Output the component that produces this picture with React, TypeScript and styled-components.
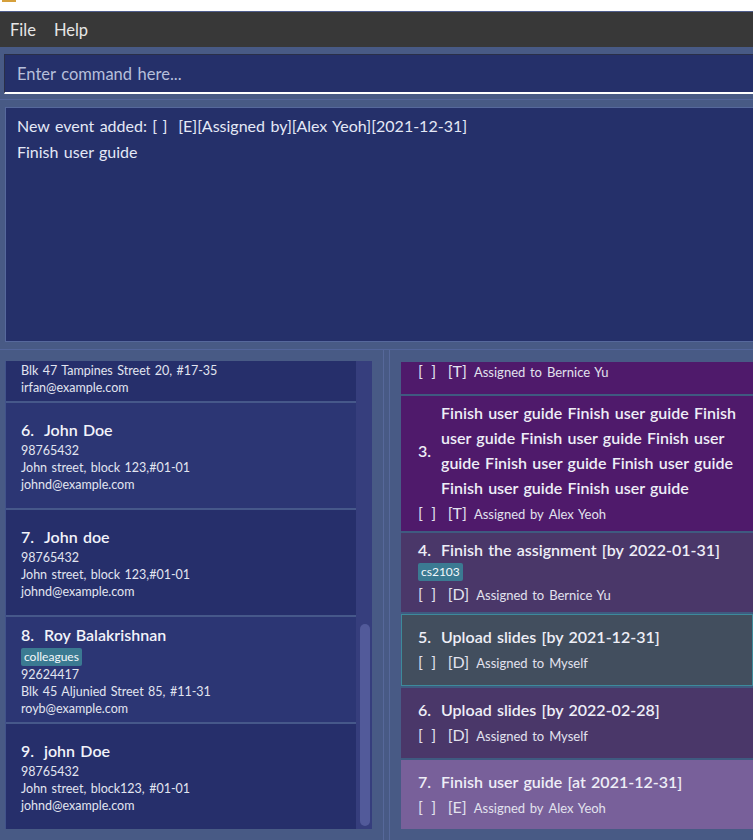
import React from 'react';
import styled, { createGlobalStyle } from 'styled-components';

const GlobalStyle = createGlobalStyle`
  html, body { margin: 0; padding: 0; background: #ffffff; }
  body { font-family: 'Lato', 'Liberation Sans', sans-serif; word-spacing: 0.08em; }
  * { box-sizing: border-box; }
`;

const Window = styled.div`
  width: 753px;
  height: 840px;
  overflow: hidden;
  display: flex;
  flex-direction: column;
  background: #485a85;
`;

const TitleStrip = styled.div`
  flex: none;
  height: 11px;
  background: #ffffff;
  padding-left: 2px;
`;

const AppIcon = styled.div`
  width: 14px;
  height: 2px;
  background: #d6a03c;
`;

const MenuBar = styled.div`
  flex: none;
  height: 36px;
  background: #383838;
  border-top: 1px solid #4f5d8c;
  display: flex;
  align-items: center;
  gap: 18px;
  padding-left: 10px;
`;

const MenuItem = styled.span`
  color: #e6e6e6;
  font-size: 16.5px;
`;

const CommandPane = styled.div`
  flex: none;
  padding: 7px 0 5px 4px;
  border-bottom: 1px solid #53659a;
`;

const CommandInput = styled.input`
  display: block;
  width: 100%;
  height: 40px;
  margin: 0;
  background: #25306a;
  border: none;
  border-top: 1px solid #2a2f48;
  border-left: 1px solid #2a2f48;
  border-bottom: 2px solid #ffffff;
  padding: 0 0 0 12px;
  font-family: 'Lato', 'Liberation Sans', sans-serif;
  font-size: 16.5px;
  word-spacing: 0.08em;
  color: #ffffff;
  outline: none;
  &::placeholder { color: #b6bfdb; }
`;

const ResultPane = styled.div`
  flex: none;
  padding: 7px 0 7px 5px;
`;

const ResultBox = styled.div`
  height: 235px;
  background: #25306a;
  border: 1px solid #56689c;
  border-right: none;
  padding: 5px 11px;
  color: #e4e8f6;
  font-size: 16px;
  line-height: 26px;
  white-space: pre;
`;

const SplitArea = styled.div`
  flex: 1;
  min-height: 0;
  display: flex;
  border-top: 1px solid #53659a;
`;

const LeftPane = styled.div`
  flex: none;
  width: 383px;
  padding: 11px 11px 11px 5px;
  display: flex;
`;

const PersonListBox = styled.div`
  flex: 1;
  display: flex;
  border-left: 1px solid #41528a;
`;

const PersonViewport = styled.div`
  flex: 1;
  overflow: hidden;
  background: #46588a;
`;

const PersonColumn = styled.div`
  display: flex;
  flex-direction: column;
  gap: 2px;
  margin-top: -65px;
`;

const PersonCard = styled.div<{ $alt: boolean }>`
  flex: none;
  height: 105px;
  background: ${(p) => (p.$alt ? '#2c3674' : '#262f6b')};
  padding-left: 15px;
  display: flex;
  flex-direction: column;
  justify-content: center;
`;

const NameRow = styled.div`
  display: flex;
  font-size: 16px;
  font-weight: 600;
  line-height: 24px;
  color: #f2f3fa;
`;

const IdLabel = styled.span`
  flex: none;
  width: 23px;
`;

const TagRow = styled.div`
  display: flex;
  gap: 4px;
  margin-top: 1px;
  height: 18px;
`;

const Tag = styled.span`
  background: #3b7a92;
  color: #f4f8fb;
  font-size: 12px;
  line-height: 17px;
  padding: 0 3px;
  border-radius: 2px;
`;

const Detail = styled.div`
  font-size: 12.5px;
  line-height: 17px;
  color: #e2e5f0;
`;

const ScrollTrack = styled.div`
  flex: none;
  width: 16px;
  background: #363e7d;
  padding: 0 2px 3px 4px;
  display: flex;
  flex-direction: column;
  justify-content: flex-end;
`;

const ScrollThumb = styled.div`
  height: 202px;
  border-radius: 5px;
  background: #525a9a;
`;

const Divider = styled.div`
  flex: none;
  width: 7px;
  border-left: 1px solid #56689a;
  border-right: 1px solid #56689a;
`;

const RightPane = styled.div`
  flex: 1;
  min-width: 0;
  padding: 12px 0 11px 11px;
  display: flex;
`;

const TaskViewport = styled.div`
  flex: 1;
  overflow: hidden;
  background: #3f5a80;
  display: flex;
  flex-direction: column;
  gap: 2px;
`;

type Kind = 'T' | 'D' | 'E';

const kindColor: Record<Kind, string> = {
  T: '#4f1a6b',
  D: '#4a3769',
  E: '#78609a',
};

const TaskCard = styled.div<{ $kind: Kind; $selected?: boolean; $shift?: number }>`
  flex: none;
  min-height: ${(p) => (p.$selected ? '72px' : '70px')};
  margin-top: ${(p) => (p.$shift ? `${p.$shift}px` : '0')};
  background: ${(p) => (p.$selected ? '#424e5e' : kindColor[p.$kind])};
  border: ${(p) => (p.$selected ? '1px solid #3d8a9b' : 'none')};
  padding: 4px 0 6px ${(p) => (p.$selected ? '16px' : '17px')};
  display: flex;
  flex-direction: column;
  justify-content: center;
`;

const TitleRow = styled.div`
  display: flex;
  align-items: center;
  font-size: 16px;
  font-weight: 600;
  line-height: 25px;
  color: #eeeef7;
`;

const TitleLines = styled.div`
  display: flex;
  flex-direction: column;
  white-space: nowrap;
`;

const MetaRow = styled.div`
  display: flex;
  align-items: baseline;
  height: 25px;
  line-height: 25px;
  color: #e2e2ee;
  white-space: nowrap;
`;

const Check = styled.span`
  font-size: 16px;
  letter-spacing: 1.5px;
  margin-right: 10px;
  white-space: pre;
`;

const TypeLabel = styled.span`
  font-size: 16px;
  margin-right: 7px;
`;

const AssignLabel = styled.span`
  font-size: 13px;
  margin-right: 5px;
`;

const AssigneeLabel = styled.span`
  font-size: 13px;
`;

type Person = { id: number; name: string; tags: string[]; phone: string; address: string; email: string };

const persons: Person[] = [
  { id: 5, name: 'Irfan Ibrahim', tags: ['classmates'], phone: '92492021', address: 'Blk 47 Tampines Street 20, #17-35', email: 'irfan@example.com' },
  { id: 6, name: 'John Doe', tags: [], phone: '98765432', address: 'John street, block 123,#01-01', email: 'johnd@example.com' },
  { id: 7, name: 'John doe', tags: [], phone: '98765432', address: 'John street, block 123,#01-01', email: 'johnd@example.com' },
  { id: 8, name: 'Roy Balakrishnan', tags: ['colleagues'], phone: '92624417', address: 'Blk 45 Aljunied Street 85, #11-31', email: 'royb@example.com' },
  { id: 9, name: 'john Doe', tags: [], phone: '98765432', address: 'John street, block123, #01-01', email: 'johnd@example.com' },
];

type Task = {
  id: number;
  kind: Kind;
  lines: string[];
  tags: string[];
  assign: string;
  who: string;
  selected?: boolean;
  shift?: number;
};

const tasks: Task[] = [
  { id: 2, kind: 'T', lines: ['Read lecture notes'], tags: [], assign: 'Assigned to', who: 'Bernice Yu', shift: -38 },
  {
    id: 3,
    kind: 'T',
    lines: [
      'Finish user guide Finish user guide Finish',
      'user guide Finish user guide Finish user',
      'guide Finish user guide Finish user guide',
      'Finish user guide Finish user guide',
    ],
    tags: [],
    assign: 'Assigned by',
    who: 'Alex Yeoh',
  },
  { id: 4, kind: 'D', lines: ['Finish the assignment [by 2022-01-31]'], tags: ['cs2103'], assign: 'Assigned to', who: 'Bernice Yu' },
  { id: 5, kind: 'D', lines: ['Upload slides [by 2021-12-31]'], tags: [], assign: 'Assigned to', who: 'Myself', selected: true },
  { id: 6, kind: 'D', lines: ['Upload slides [by 2022-02-28]'], tags: [], assign: 'Assigned to', who: 'Myself' },
  { id: 7, kind: 'E', lines: ['Finish user guide [at 2021-12-31]'], tags: [], assign: 'Assigned by', who: 'Alex Yeoh' },
];

export default function App() {
  return (
    <>
      <GlobalStyle />
      <Window>
        <TitleStrip>
          <AppIcon />
        </TitleStrip>
        <MenuBar>
          <MenuItem>File</MenuItem>
          <MenuItem>Help</MenuItem>
        </MenuBar>
        <CommandPane>
          <CommandInput placeholder="Enter command here..." readOnly />
        </CommandPane>
        <ResultPane>
          <ResultBox>{'New event added: [ ]  [E][Assigned by][Alex Yeoh][2021-12-31]\nFinish user guide'}</ResultBox>
        </ResultPane>
        <SplitArea>
          <LeftPane>
            <PersonListBox>
              <PersonViewport>
                <PersonColumn>
                  {persons.map((p) => (
                    <PersonCard key={p.id} $alt={p.id % 2 === 0}>
                      <NameRow>
                        <IdLabel>{p.id}.</IdLabel>
                        <span>{p.name}</span>
                      </NameRow>
                      {p.tags.length > 0 && (
                        <TagRow>
                          {p.tags.map((t) => (
                            <Tag key={t}>{t}</Tag>
                          ))}
                        </TagRow>
                      )}
                      <Detail>{p.phone}</Detail>
                      <Detail>{p.address}</Detail>
                      <Detail>{p.email}</Detail>
                    </PersonCard>
                  ))}
                </PersonColumn>
              </PersonViewport>
              <ScrollTrack>
                <ScrollThumb />
              </ScrollTrack>
            </PersonListBox>
          </LeftPane>
          <Divider />
          <RightPane>
            <TaskViewport>
              {tasks.map((t) => (
                <TaskCard key={t.id} $kind={t.kind} $selected={t.selected} $shift={t.shift}>
                  <TitleRow>
                    <IdLabel>{t.id}.</IdLabel>
                    <TitleLines>
                      {t.lines.map((l, i) => (
                        <span key={i}>{l}</span>
                      ))}
                    </TitleLines>
                  </TitleRow>
                  {t.tags.length > 0 && (
                    <TagRow>
                      {t.tags.map((tag) => (
                        <Tag key={tag}>{tag}</Tag>
                      ))}
                    </TagRow>
                  )}
                  <MetaRow>
                    <Check>{'[ ]'}</Check>
                    <TypeLabel>[{t.kind}]</TypeLabel>
                    <AssignLabel>{t.assign}</AssignLabel>
                    <AssigneeLabel>{t.who}</AssigneeLabel>
                  </MetaRow>
                </TaskCard>
              ))}
            </TaskViewport>
          </RightPane>
        </SplitArea>
      </Window>
    </>
  );
}
